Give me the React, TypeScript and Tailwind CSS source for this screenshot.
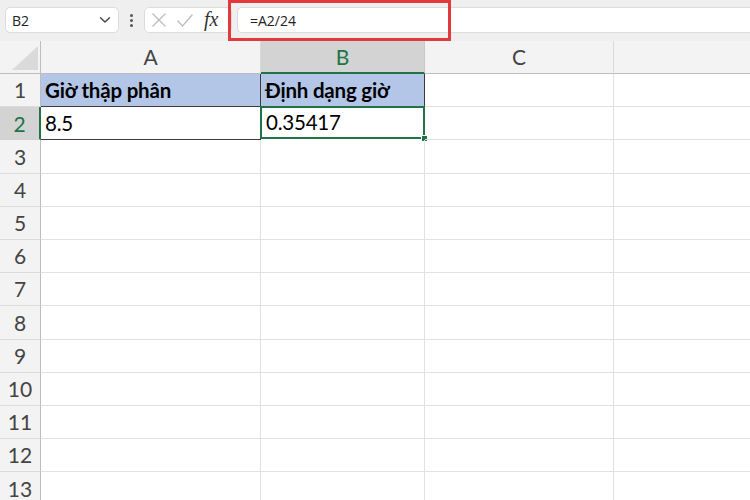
import React from "react";

const font = { fontFamily: "Lato, 'Noto Sans', sans-serif" };
const uiFont = { fontFamily: "'Open Sans', 'Noto Sans', sans-serif" };

function Chevron() {
  return (
    <svg width="12" height="8" viewBox="0 0 12 8" fill="none">
      <path d="M1.5 1.8 L6 6 L10.5 1.8" stroke="#444" strokeWidth="1.4" strokeLinecap="round" strokeLinejoin="round" />
    </svg>
  );
}

function Toolbar() {
  return (
    <div className="relative h-[41px] bg-[#efefef] flex items-start pt-[7px]" style={uiFont}>
      <div className="ml-[5px] w-[114px] h-[26px] bg-white border border-[#dcdcdc] rounded-[5px] flex items-center justify-between pl-[6px] pr-[7px]">
        <span className="text-[14px] text-[#222]">B2</span>
        <Chevron />
      </div>
      <div className="w-[25px] h-[26px] flex flex-col items-center justify-center gap-[2px]">
        <span className="w-[3px] h-[3px] rounded-full bg-[#555]" />
        <span className="w-[3px] h-[3px] rounded-full bg-[#555]" />
        <span className="w-[3px] h-[3px] rounded-full bg-[#555]" />
      </div>
      <div className="w-[88px] h-[26px] bg-white border border-[#dcdcdc] rounded-[5px] flex items-center pl-[6px]">
        <svg width="16" height="16" viewBox="0 0 16 16">
          <path d="M1.5 1.5 L14.5 14.5 M14.5 1.5 L1.5 14.5" stroke="#bdbdbd" strokeWidth="1.3" />
        </svg>
        <svg width="18" height="16" viewBox="0 0 18 16" className="ml-[9px]">
          <path d="M1.5 8.5 L6.5 14 L16.5 2.5" stroke="#bdbdbd" strokeWidth="1.3" fill="none" />
        </svg>
        <span className="ml-[10px] text-[20px] italic text-[#333] leading-none -mt-[2px]" style={{ fontFamily: "'Liberation Serif', serif" }}>
          fx
        </span>
      </div>
      <div className="ml-[5px] flex-1 h-[26px] bg-white border border-[#dcdcdc] border-r-0 rounded-l-[5px] flex items-center pl-[12px]">
        <span className="text-[14px] text-[#222]">=A2/24</span>
      </div>
      <div className="absolute left-[228px] top-0 w-[223px] h-[41px] border-[3px] border-[#e23a3c]" />
    </div>
  );
}

const widths = [41, 220, 164, 189];

function HeaderRow() {
  const cols = ["A", "B", "C"];
  return (
    <div className="flex h-[33px] bg-[#f3f3f3]" style={font}>
      <div className="w-[41px] h-full relative border-r border-b border-[#bdbdbd] shrink-0">
        <svg className="absolute left-[12px] top-[5px]" width="26" height="25" viewBox="0 0 26 25">
          <path d="M0 24 L26 24 L26 0 Z" fill="#dadada" />
        </svg>
      </div>
      {cols.map((c, i) => {
        const sel = c === "B";
        return (
          <div
            key={c}
            style={{ width: widths[i + 1] }}
            className={
              sel
                ? "shrink-0 h-full flex items-center justify-center bg-[#d3d3d3] border-r border-[#c8c8c8] border-b-2 border-b-[#217346] text-[21px] text-[#217346]"
                : "shrink-0 h-full flex items-center justify-center border-r border-[#dadada] border-b border-b-[#bdbdbd] text-[21px] text-[#444]"
            }
          >
            {c}
          </div>
        );
      })}
      <div className="flex-1 h-full border-b border-[#bdbdbd]" />
    </div>
  );
}

type Cell = { text?: string; bold?: boolean; fill?: boolean; table?: boolean; sel?: boolean };

function Row({ n, cells }: { n: number; cells: Cell[] }) {
  const selRow = n === 2;
  return (
    <div className="flex h-[33.2px]" style={font}>
      <div
        className={
          selRow
            ? "w-[41px] shrink-0 h-full flex items-center justify-center bg-[#d3d3d3] border-r-2 border-r-[#217346] border-b border-b-[#d0d0d0] text-[21px] text-[#217346]"
            : "w-[41px] shrink-0 h-full flex items-center justify-center bg-[#f3f3f3] border-r border-r-[#bdbdbd] border-b border-b-[#dcdcdc] text-[21px] text-[#444]"
        }
      >
        {n}
      </div>
      {[0, 1, 2].map((i) => {
        const c = cells[i] || {};
        let cls = "shrink-0 h-full flex items-center pl-[4px] text-[20.5px] tracking-[-0.01em] text-black relative ";
        if (c.sel) {
          cls += "border-2 border-[#217346] bg-white ml-[-1px] mt-[-1px] h-[calc(100%+1px)] ";
        } else if (c.table) {
          cls += "border-r border-b border-[#3c3c3c] ";
        } else {
          cls += "border-r border-b border-[#e1e1e1] ";
        }
        if (c.fill) cls += "bg-[#b4c6e7] ";
        if (c.bold) cls += "font-bold ";
        return (
          <div key={i} className={cls} style={{ width: widths[i + 1] + (c.sel ? 1 : 0) }}>
            {c.text}
            {c.sel && (
              <span className="absolute right-[-5px] bottom-[-5px] w-[7px] h-[7px] bg-[#217346] border border-white" />
            )}
          </div>
        );
      })}
      <div className="flex-1 h-full border-b border-[#e1e1e1]" />
    </div>
  );
}

export default function App() {
  const data: Record<number, Cell[]> = {
    1: [
      { text: "Giờ thập phân", bold: true, fill: true, table: true },
      { text: "Định dạng giờ", bold: true, fill: true, table: true },
    ],
    2: [{ text: "8.5", table: true }, { text: "0.35417", sel: true }],
  };
  return (
    <div className="w-[750px] h-[500px] overflow-hidden bg-white">
      <Toolbar />
      <HeaderRow />
      {Array.from({ length: 13 }, (_, i) => i + 1).map((n) => (
        <Row key={n} n={n} cells={data[n] || []} />
      ))}
    </div>
  );
}
